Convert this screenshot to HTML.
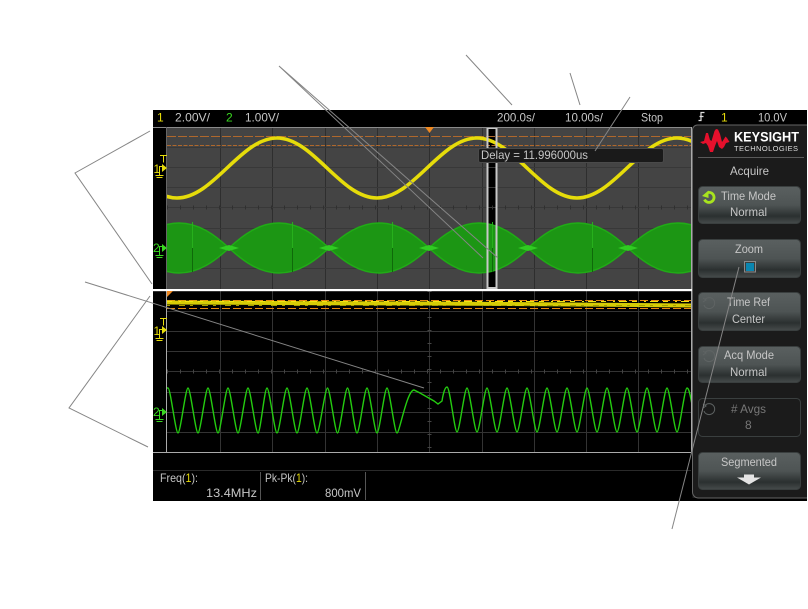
<!DOCTYPE html>
<html><head><meta charset="utf-8"><style>
html,body{margin:0;padding:0;background:#fff}
svg{display:block;font-family:"Liberation Sans",sans-serif}
text{font-size:12px;fill:#c6c6c6}
</style></head><body>
<svg width="808" height="609" viewBox="0 0 808 609" xmlns="http://www.w3.org/2000/svg">
<defs>
<clipPath id="u"><rect x="167" y="128" width="524" height="161"/></clipPath>
<clipPath id="l"><rect x="167" y="291" width="524" height="161"/></clipPath>
<linearGradient id="b" x1="0" y1="0" x2="0" y2="1"><stop offset="0" stop-color="#5a6060"/><stop offset=".5" stop-color="#4e5454"/><stop offset=".8" stop-color="#2b3030"/><stop offset="1" stop-color="#464b4b"/></linearGradient>
<path id="lobe" d="M0 0C14 -13 30 -25 50 -25C70 -25 86 -13 100 0C86 13 70 25 50 25C30 25 14 13 0 0Z" fill="#1c9614" stroke="#20ac16" stroke-width="1.5"/>
<path id="nd" d="M-10 0L0 -3L10 0L0 3Z" fill="#30cc22"/>
</defs>
<rect x="153" y="110" width="654" height="391" fill="#000"/>
<!-- upper -->
<rect x="167" y="127" width="524" height="162" fill="#444"/>
<rect x="487" y="127" width="10" height="162" fill="#000"/>
<g stroke="#2e2e2e" stroke-width="1">
<path d="M220.500 127V289M272.500 127V289M325.500 127V289M377.500 127V289M429.500 127V289M482.500 127V289M534.500 127V289M586.500 127V289M638.500 127V289"/>
</g>
<g stroke="#383838" stroke-width="1">
<path d="M167 147.500H691M167 167.500H691M167 187.500H691M167 207.500H691M167 228.500H691M167 248.500H691M167 268.500H691"/>
</g>
<path d="M167 207.500H691" stroke="#303030" stroke-width="4" stroke-dasharray="1 12"/>
<path d="M167 136.500H691" stroke="#b0682c" stroke-dasharray="9 2"/>
<path d="M167 145.500H691" stroke="#b0682c" stroke-dasharray="4 1.500"/>
<g clip-path="url(#u)">
<path d="M77 138C113.400 138 140.600 198 177 198S240.600 138 277 138S340.600 198 377 198S440.600 138 477 138S540.600 198 577 198S640.600 138 677 138S740.600 198 777 198" fill="none" stroke="#e6dc0a" stroke-width="3.600"/>
<use href="#lobe" x="129" y="248"/><use href="#lobe" x="229" y="248"/><use href="#lobe" x="329" y="248"/><use href="#lobe" x="429" y="248"/><use href="#lobe" x="528" y="248"/><use href="#lobe" x="628" y="248"/>
<use href="#nd" x="229" y="248"/><use href="#nd" x="329" y="248"/><use href="#nd" x="429" y="248"/><use href="#nd" x="528" y="248"/><use href="#nd" x="628" y="248"/>
<path d="M192.500 222V248M292.500 222V248M392.500 222V248M492.500 222V248M592.500 222V248" stroke="#27b01c"/>
<path d="M192.500 248V272M292.500 248V272M392.500 248V272M492.500 248V272M592.500 248V272" stroke="#0f6a0a"/>
</g>
<rect x="487.500" y="128" width="9" height="160" fill="none" stroke="#c8c8c8" stroke-width="2"/>
<rect x="478.500" y="148.500" width="185" height="14" rx="2" fill="#1a1a1a" stroke="#4a4a4a"/>
<text x="481" y="159" textLength="107" lengthAdjust="spacingAndGlyphs">Delay = 11.996000us</text>
<path d="M153 127.500H691" stroke="#8a8a8a"/>
<path d="M425 127h9l-4.500 6z" fill="#ee8820"/>
<!-- lower -->
<g stroke="#333" stroke-width="1">
<path d="M220.500 291V452M272.500 291V452M325.500 291V452M377.500 291V452M429.500 291V452M482.500 291V452M534.500 291V452M586.500 291V452M638.500 291V452"/>
<path d="M167 311.500H691M167 331.500H691M167 351.500H691M167 371.500H691M167 392.500H691M167 412.500H691M167 432.500H691"/>
</g>
<path d="M167 371.500H691" stroke="#444" stroke-width="4" stroke-dasharray="1 12"/>
<path d="M429.500 291V452" stroke="#444" stroke-width="4" stroke-dasharray="1 12"/>
<g clip-path="url(#l)">
<path d="M167 300.500H691M167 308.500H691" stroke="#e88a10" stroke-dasharray="8 3"/>
<path d="M167 302.500C260 303.500 340 303 429 303.500S600 304.500 691 305.500" fill="none" stroke="#d6cc06" stroke-width="4"/>
<path d="M167 301.500H691" stroke="#f0e612" stroke-dasharray="5 7 2 4 8 5"/>
<path d="M167 305.500H691" stroke="#a89f00" stroke-dasharray="3 9 6 5"/>
<path d="M167 388L168 388C170.500 388 175.500 433 178 433S185.500 388 188 388S195.500 433 198 433S205.500 388 208 388S215.500 433 218 433S225.500 388 228 388S235.500 433 238 433S245.500 388 248 388S255.500 433 258 433S264.500 388 267 388S274.500 433 277 433S284.500 388 287 388S294.500 433 297 433S304.500 388 307 388S314.500 433 317 433S325 388 327.500 388S335 433 337.500 433S345 388 347.500 388S354.500 433 357 433S364.500 388 367 388S374.500 433 377 433S384.500 388 387 388S394.500 433 397 433S407 390 414 390L420 393L427 397L434 401L438 404L442 401S444 387 447 387S454.500 432 457 432S464.500 388 467 388S474.500 432 477 432S484.500 388 487 388S494.500 432 497 432S504.500 388 507 388S514.500 432 517 432S524.500 388 527 388S534.500 432 537 432S544.500 388 547 388S554.500 432 557 432S564.500 388 567 388S574.500 432 577 432S584.500 388 587 388S594.500 432 597 432S604.500 388 607 388S614.500 432 617 432S624.500 388 627 388S634.500 432 637 432S644.500 388 647 388S654.500 432 657 432S664.500 388 667 388S674.500 432 677 432S684.500 388 687 388S691 400 693 410" fill="none" stroke="#24cc10" stroke-width="1.400"/>
</g>
<path d="M166.500 127V289" stroke="#666"/>
<path d="M166.500 291V452" stroke="#aaa"/>
<path d="M691.500 127V452" stroke="#aaa"/>
<path d="M153 452.500H691" stroke="#aaa"/>
<rect x="153" y="289" width="539" height="2.200" fill="#fff"/>
<path d="M167 291h6l-6 6z" fill="#ee8820"/>
<path d="M153 470.500H691" stroke="#2a2a2a"/>
<!-- channel markers -->
<g fill="none" stroke="#e6dc0a" stroke-width="1">
<path d="M160 155.500h7M163.500 155.500v7M159.500 172V166.500h3M159.500 172V175M155.500 175.500h8M156.500 177.500h6"/>
<path d="M160 318.500h7M163.500 318.500v7M159.500 335V329.500h3M159.500 335V338M155.500 338.500h8M156.500 340.500h6"/>
</g>
<path d="M162 164l5 4-5 4z" fill="#e6dc0a"/><path d="M162 326l5 4-5 4z" fill="#e6dc0a"/>
<text x="153.500" y="173" style="fill:#e6dc0a;font-size:12px">1</text>
<text x="153.500" y="335" style="fill:#e6dc0a;font-size:12px">1</text>
<g fill="none" stroke="#39d820" stroke-width="1">
<path d="M159.500 252V246.500h3M159.500 252V255M155.500 255.500h8M156.500 257.500h6"/>
<path d="M159.500 416V410.500h3M159.500 416V419M155.500 419.500h8M156.500 421.500h6"/>
</g>
<path d="M162 244l5 4-5 4z" fill="#39d820"/><path d="M162 408l5 4-5 4z" fill="#39d820"/>
<text x="153" y="252" style="fill:#39d820;font-size:12px">2</text>
<text x="153" y="416" style="fill:#39d820;font-size:12px">2</text>
<!-- status -->
<text x="157" y="121.500" style="fill:#e6dc0a">1</text>
<text x="175" y="121.500" textLength="35" lengthAdjust="spacingAndGlyphs">2.00V/</text>
<text x="226" y="121.500" style="fill:#39d820">2</text>
<text x="245" y="121.500" textLength="34" lengthAdjust="spacingAndGlyphs">1.00V/</text>
<text x="497" y="121.500" textLength="38" lengthAdjust="spacingAndGlyphs">200.0s/</text>
<text x="565" y="121.500" textLength="38" lengthAdjust="spacingAndGlyphs">10.00s/</text>
<text x="641" y="121.500" textLength="22" lengthAdjust="spacingAndGlyphs">Stop</text>
<path d="M698.500 120.500h2.500v-8h3.500M699.500 116.500h4" fill="none" stroke="#ddd" stroke-width="1.200"/>
<text x="721" y="121.500" style="fill:#e6dc0a">1</text>
<text x="758" y="121.500" textLength="29" lengthAdjust="spacingAndGlyphs">10.0V</text>
<!-- measurements -->
<text x="160" y="482" textLength="38" lengthAdjust="spacingAndGlyphs">Freq(<tspan style="fill:#e6dc0a">1</tspan>):</text>
<text x="206" y="497" textLength="51" lengthAdjust="spacingAndGlyphs">13.4MHz</text>
<text x="265" y="482" textLength="43" lengthAdjust="spacingAndGlyphs">Pk-Pk(<tspan style="fill:#e6dc0a">1</tspan>):</text>
<text x="325" y="497" textLength="36" lengthAdjust="spacingAndGlyphs">800mV</text>
<path d="M260.500 472V500M365.500 472V500" stroke="#555"/>
<!-- panel -->
<path d="M692.500 498V130a5 5 0 0 1 5-5H807V498Z" fill="#1b1b1b"/>
<path d="M692.500 492V130a5 5 0 0 1 5-5H807M692.500 492a6 6 0 0 0 6 6H807" fill="none" stroke="#666"/>
<path d="M700 142L704 141L706 133L708 133L710 140L711.500 141L714.500 131L716 129L718 129.500L720 134L722 142L724 139L725.500 136.500L727 138L729.500 142L726 143L724 147L722 149L719 147L717 141L715 146L713 152L710 152L708 146L706 143L703 144Z" fill="#e6102c"/>
<text x="734" y="141.500" textLength="65" lengthAdjust="spacingAndGlyphs" style="font-size:13.500px;font-weight:bold;fill:#fff">KEYSIGHT</text>
<text x="734" y="151" textLength="64" lengthAdjust="spacing" style="font-size:7.500px;fill:#ddd">TECHNOLOGIES</text>
<path d="M698 157.500H804" stroke="#5a5a5a"/>
<text x="730" y="175" textLength="39" lengthAdjust="spacingAndGlyphs">Acquire</text>
<g stroke="#3a3f3f" fill="url(#b)">
<rect x="698.500" y="186.500" width="102" height="37" rx="4"/>
<rect x="698.500" y="239.500" width="102" height="38" rx="4"/>
<rect x="698.500" y="292.500" width="102" height="38" rx="4"/>
<rect x="698.500" y="346.500" width="102" height="36" rx="4"/>
<rect x="698.500" y="452.500" width="102" height="37" rx="4"/>
</g>
<rect x="698.500" y="398.500" width="102" height="38" rx="4" fill="#1b1b1b" stroke="#3a3f3f"/>
<path d="M708 192.500A5 5 0 1 1 704.500 199.500" fill="none" stroke="#a8e41e" stroke-width="2.800"/>
<path d="M702 196L708.500 190.500V198Z" fill="#a8e41e"/>
<text x="721" y="200" textLength="55" lengthAdjust="spacingAndGlyphs">Time Mode</text>
<text x="730" y="216" textLength="37" lengthAdjust="spacingAndGlyphs">Normal</text>
<text x="735" y="253" textLength="28" lengthAdjust="spacingAndGlyphs">Zoom</text>
<rect x="744.500" y="261.500" width="11" height="10.500" fill="#3a3f3f" stroke="#8a8a8a"/>
<rect x="746" y="263" width="8" height="8" fill="#0a86b0"/>
<g fill="none" stroke="#5f6464" stroke-width="1">
<path d="M705 299.500A5.500 5.500 0 1 1 704 305M703 298l3 2-3 2"/>
<path d="M705 352.500A5.500 5.500 0 1 1 704 358M703 351l3 2-3 2"/>
<path d="M705 405.500A5.500 5.500 0 1 1 704 411M703 404l3 2-3 2"/>
</g>
<text x="727" y="306" textLength="43" lengthAdjust="spacingAndGlyphs">Time Ref</text>
<text x="732" y="323" textLength="33" lengthAdjust="spacingAndGlyphs">Center</text>
<text x="724" y="359" textLength="50" lengthAdjust="spacingAndGlyphs">Acq Mode</text>
<text x="730" y="376" textLength="37" lengthAdjust="spacingAndGlyphs">Normal</text>
<text x="731" y="413" textLength="35" lengthAdjust="spacingAndGlyphs" style="fill:#777"># Avgs</text>
<text x="745" y="429" style="fill:#777">8</text>
<text x="721" y="466" textLength="56" lengthAdjust="spacingAndGlyphs">Segmented</text>
<path d="M744 474.500h10v3h7l-12 7-12-7h7z" fill="#e4e4e4"/>
<!-- annotation leader lines -->
<g stroke="#858585" stroke-width="1" fill="none">
<path d="M279 66L498 258M279 66L483 258"/>
<path d="M466 55L512 105M570 73L580 105M630 97L595 151"/>
<path d="M150 131L75 173L152 284"/>
<path d="M85 282L424 388"/>
<path d="M150 296L69 408L148 447"/>
<path d="M739 267L672 529"/>
</g>
</svg>
</body></html>
